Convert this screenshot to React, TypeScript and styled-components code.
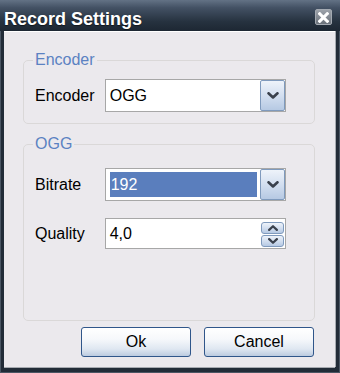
import * as React from 'react';
import styled, { createGlobalStyle } from 'styled-components';

const GlobalStyle = createGlobalStyle`
  html, body {
    margin: 0;
    padding: 0;
  }

  body {
    width: 340px;
    height: 373px;
    overflow: hidden;
    background: #222c38;
  }
`;

const Window = styled.div`
  width: 340px;
  height: 373px;
  box-sizing: border-box;
  display: flex;
  flex-direction: column;

  background: #222c38;
  box-shadow: inset 1px 0 0 #4b5664, inset -1px 0 0 #4b5664, inset 0 -1px 0 #4b5664;
  font-family: "Liberation Sans", Arial, sans-serif;
`;

const TitleBar = styled.div`
  flex: none;
  height: 31px;
  box-sizing: border-box;
  display: flex;
  align-items: flex-start;
  justify-content: space-between;
  padding: 0 8px 0 4px;

  background: linear-gradient(#637285 0%, #435164 25%, #26323f 70%, #1d2733 100%);
`;

const Title = styled.h1`
  margin: 0;
  padding-top: 10px;
  font: bold 18px/18px "Liberation Sans", Arial, sans-serif;
  color: #fff;
  text-shadow: 0 1px 1px rgba(0, 0, 0, 0.5);
`;

const CloseButton = styled.button`
  margin-top: 9px;
  width: 17px;
  height: 16px;
  padding: 0;
  box-sizing: border-box;
  display: flex;
  align-items: center;
  justify-content: center;

  border: 1px solid #a4aab2;
  border-radius: 2px;
  background: linear-gradient(#9ca2aa, #6b727b);
`;

const Body = styled.div`
  flex: 1;
  display: flex;
  flex-direction: column;
  margin: 0 5px 6px 4px;
  padding: 20px 20px 10px 19px;

  background: #ebe9ed;
  border-top: 1px solid #ffffff;
  box-shadow: 1px 0 0 #a7abb1, 0 1px 0 #a7abb1;
`;

const Group = styled.fieldset<{ $fill?: boolean }>`
  margin: 0;
  min-width: 0;
  padding: ${(p) => (p.$fill ? '16px 28px 11px 11px' : '11px 28px 11px 11px')};
  flex: ${(p) => (p.$fill ? 1 : 'none')};

  border: 1px solid #dad8d8;
  border-radius: 5px;

  & + & {
    margin-top: 12px;
  }
`;

const Legend = styled.legend`
  margin-left: -2px;
  padding: 0 2px;
  font-size: 16px;
  line-height: 16px;
  color: #5b82c2;
`;

const Row = styled.div`
  display: flex;
  align-items: center;

  & + & {
    margin-top: 17px;
  }
`;

const Label = styled.span`
  width: 70px;
  font-size: 16px;
  color: #000;
`;

const Field = styled.div<{ $height: number }>`
  width: 182px;
  height: ${(p) => p.$height}px;
  box-sizing: border-box;
  display: flex;
  align-items: stretch;

  background: #fff;
  border: 1px solid #a7a7a7;
`;

const Value = styled.div<{ $selected?: boolean }>`
  flex: 1;
  display: flex;
  align-items: center;
  margin: ${(p) => (p.$selected ? '3px 3px 3px 4px' : '0')};
  padding-left: ${(p) => (p.$selected ? '1px' : '4px')};

  font-size: 16px;
  color: ${(p) => (p.$selected ? '#fff' : '#000')};
  background: ${(p) => (p.$selected ? '#5a7ebd' : 'transparent')};
`;

const DropButton = styled.div`
  width: 25px;
  box-sizing: border-box;
  display: flex;
  align-items: center;
  justify-content: center;

  border: 1px solid #7f9abd;
  border-radius: 2px;
  background: linear-gradient(#eef3fa 0%, #d3dff0 50%, #b6c9e3 100%);
`;

const SpinColumn = styled.div`
  width: 23px;
  margin: 3px 1px 1px 0;
  display: flex;
  flex-direction: column;
  gap: 1px;
`;

const SpinButton = styled.div`
  flex: 1;
  box-sizing: border-box;
  display: flex;
  align-items: center;
  justify-content: center;

  border: 1px solid #7f9abd;
  border-radius: 3px;
  background: linear-gradient(#eef3fa 0%, #d3dff0 50%, #b6c9e3 100%);
`;

const ButtonRow = styled.div`
  flex: none;
  display: flex;
  justify-content: flex-end;
  gap: 13px;
  margin-top: 6px;
  padding-right: 1px;
`;

const Button = styled.button`
  width: 110px;
  height: 30px;
  padding: 0;

  font: 16px "Liberation Sans", Arial, sans-serif;
  color: #000;
  border: 1px solid #30568a;
  border-radius: 3px;
  background: linear-gradient(#ffffff 0%, #f6f8fb 40%, #dfe7f1 75%, #bccbe0 100%);
  box-shadow: inset 0 1px 0 #ffffff;
`;

const Chevron = ({ up, width = 12, height = 7 }: { up?: boolean; width?: number; height?: number }) => (
  <svg width={width} height={height} viewBox="0 0 12 7">
    <path
      d={up ? 'M1.5 5.7 L6 1.5 L10.5 5.7' : 'M1.5 1.3 L6 5.5 L10.5 1.3'}
      fill="none"
      stroke="#3a414d"
      strokeWidth="2.6"
      strokeLinecap="round"
      strokeLinejoin="round"
    />
  </svg>
);

const Combo = ({ value, selected }: { value: string; selected?: boolean }) => (
  <Field $height={33}>
    <Value $selected={selected}>{value}</Value>
    <DropButton>
      <Chevron />
    </DropButton>
  </Field>
);

const Spinner = ({ value }: { value: string }) => (
  <Field $height={31}>
    <Value>{value}</Value>
    <SpinColumn>
      <SpinButton>
        <Chevron up width={12} height={6} />
      </SpinButton>
      <SpinButton>
        <Chevron width={12} height={6} />
      </SpinButton>
    </SpinColumn>
  </Field>
);

const App = () => (
  <Window>
    <GlobalStyle />
    <TitleBar>
      <Title>Record Settings</Title>
      <CloseButton aria-label="Close">
        <svg width="11" height="11" viewBox="0 0 10 10">
          <path d="M1.6 1.6 L8.4 8.4 M8.4 1.6 L1.6 8.4" stroke="#fff" strokeWidth="2.8" strokeLinecap="square" />
        </svg>
      </CloseButton>
    </TitleBar>
    <Body>
      <Group>
        <Legend>Encoder</Legend>
        <Row>
          <Label>Encoder</Label>
          <Combo value="OGG" />
        </Row>
      </Group>
      <Group $fill>
        <Legend>OGG</Legend>
        <Row>
          <Label>Bitrate</Label>
          <Combo value="192" selected />
        </Row>
        <Row>
          <Label>Quality</Label>
          <Spinner value="4,0" />
        </Row>
      </Group>
      <ButtonRow>
        <Button>Ok</Button>
        <Button>Cancel</Button>
      </ButtonRow>
    </Body>
  </Window>
);

export default App;
